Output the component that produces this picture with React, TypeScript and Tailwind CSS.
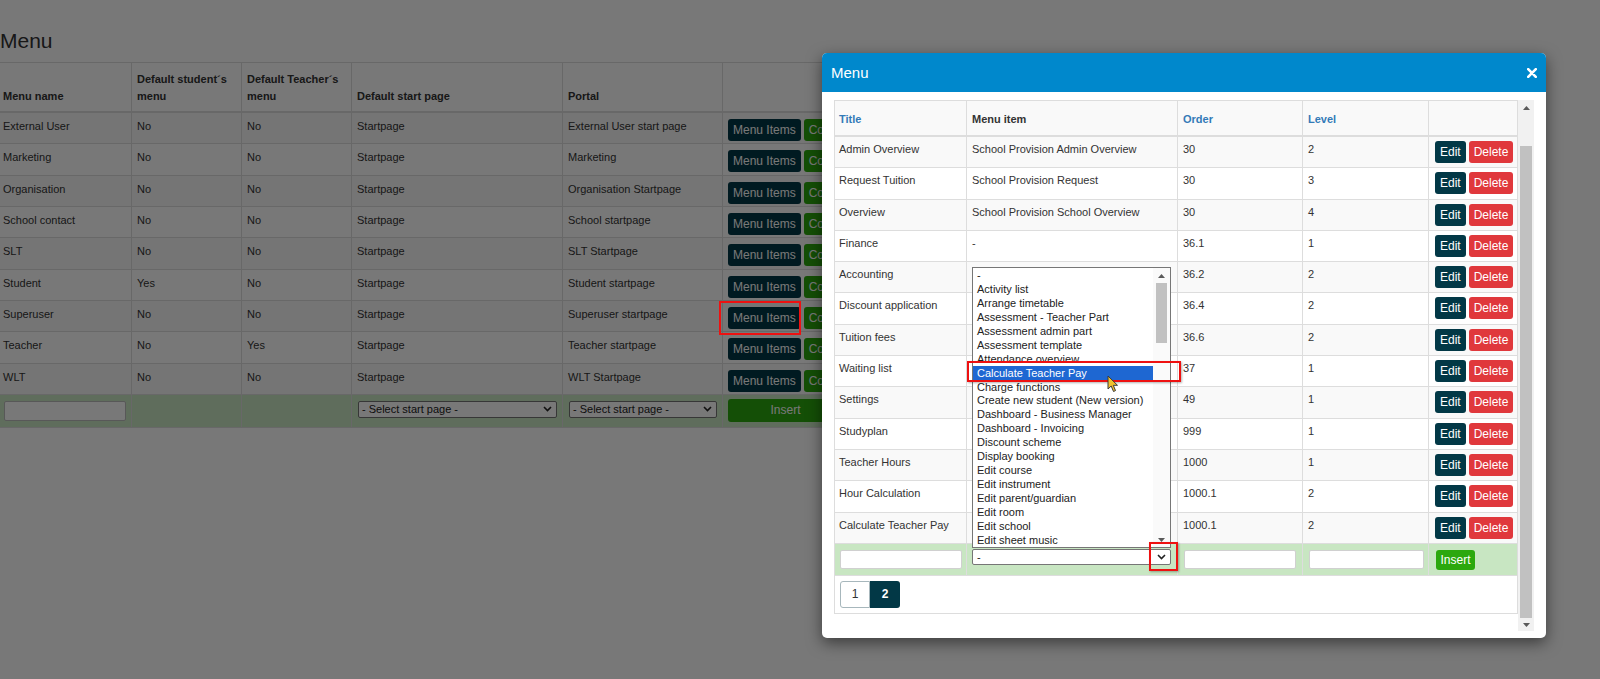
import React from "react";

const leftRows = [
  ["External User", "No", "No", "Startpage", "External User start page"],
  ["Marketing", "No", "No", "Startpage", "Marketing"],
  ["Organisation", "No", "No", "Startpage", "Organisation Startpage"],
  ["School contact", "No", "No", "Startpage", "School startpage"],
  ["SLT", "No", "No", "Startpage", "SLT Startpage"],
  ["Student", "Yes", "No", "Startpage", "Student startpage"],
  ["Superuser", "No", "No", "Startpage", "Superuser startpage"],
  ["Teacher", "No", "Yes", "Startpage", "Teacher startpage"],
  ["WLT", "No", "No", "Startpage", "WLT Startpage"],
];

const modalRows = [
  ["Admin Overview", "School Provision Admin Overview", "30", "2"],
  ["Request Tuition", "School Provision Request", "30", "3"],
  ["Overview", "School Provision School Overview", "30", "4"],
  ["Finance", "-", "36.1", "1"],
  ["Accounting", "", "36.2", "2"],
  ["Discount application", "", "36.4", "2"],
  ["Tuition fees", "", "36.6", "2"],
  ["Waiting list", "", "37", "1"],
  ["Settings", "", "49", "1"],
  ["Studyplan", "", "999", "1"],
  ["Teacher Hours", "", "1000", "1"],
  ["Hour Calculation", "", "1000.1", "2"],
  ["Calculate Teacher Pay", "", "1000.1", "2"],
];

const options = [
  "-",
  "Activity list",
  "Arrange timetable",
  "Assessment - Teacher Part",
  "Assessment admin part",
  "Assessment template",
  "Attendance overview",
  "Calculate Teacher Pay",
  "Charge functions",
  "Create new student (New version)",
  "Dashboard - Business Manager",
  "Dashboard - Invoicing",
  "Discount scheme",
  "Display booking",
  "Edit course",
  "Edit instrument",
  "Edit parent/guardian",
  "Edit room",
  "Edit school",
  "Edit sheet music",
];

function Chevron() {
  return (
    <svg width="9" height="6" viewBox="0 0 9 6" className="shrink-0">
      <path d="M1 1 L4.5 4.5 L8 1" fill="none" stroke="#222" strokeWidth="1.6" />
    </svg>
  );
}

function UpArrow() {
  return (
    <svg width="7" height="4" viewBox="0 0 7 4">
      <path d="M0 4 L3.5 0 L7 4 Z" fill="#5a5a5a" />
    </svg>
  );
}

function DownArrow() {
  return (
    <svg width="7" height="4" viewBox="0 0 7 4">
      <path d="M0 0 L3.5 4 L7 0 Z" fill="#5a5a5a" />
    </svg>
  );
}

function FakeSelect({ w, text }: { w: string; text: string }) {
  return (
    <div
      className={`${w} h-[17px] bg-white border border-[#767676] rounded-[2px] flex items-center justify-between pl-[3px] pr-[4px] text-[11px] leading-[15px] text-[#222]`}
    >
      <span className="whitespace-nowrap">{text}</span>
      <Chevron />
    </div>
  );
}

export default function App() {
  return (
    <div className="relative w-[1600px] h-[679px] overflow-hidden bg-white text-[#333] font-['Liberation_Sans',Arial,sans-serif]">
      {/* Page */}
      <div className="pt-[28px]">
        <h1 className="text-[21px] leading-[26px] font-normal mb-[8px]">Menu</h1>
        <div className="w-[1150px] text-[11px]">
          <div className="grid grid-cols-[132px_110px_110px_211px_160px_427px] h-[51px] border-t border-b-2 border-[#ddd] font-bold leading-[16.5px]">
            <div className="flex items-end pb-[7px] pl-[3px] border-r border-[#ddd]">Menu name</div>
            <div className="flex items-end pb-[7px] pl-[5px] border-r border-[#ddd]">Default student´s menu</div>
            <div className="flex items-end pb-[7px] pl-[5px] border-r border-[#ddd]">Default Teacher´s menu</div>
            <div className="flex items-end pb-[7px] pl-[5px] border-r border-[#ddd]">Default start page</div>
            <div className="flex items-end pb-[7px] pl-[5px] border-r border-[#ddd]">Portal</div>
            <div className="border-r border-[#ddd]"></div>
          </div>
          {leftRows.map((r, i) => (
            <div
              key={i}
              className={`grid grid-cols-[132px_110px_110px_211px_160px_427px] h-[31.33px] border-b border-[#ddd] leading-[16.5px] ${i % 2 === 0 ? "bg-[#f9f9f9]" : "bg-white"}`}
            >
              <div className="pt-[5px] pl-[3px] border-r border-[#ddd]">{r[0]}</div>
              <div className="pt-[5px] pl-[5px] border-r border-[#ddd]">{r[1]}</div>
              <div className="pt-[5px] pl-[5px] border-r border-[#ddd]">{r[2]}</div>
              <div className="pt-[5px] pl-[5px] border-r border-[#ddd]">{r[3]}</div>
              <div className="pt-[5px] pl-[5px] border-r border-[#ddd]">{r[4]}</div>
              <div className="pt-[6px] pl-[5px] border-r border-[#ddd] flex gap-[3px] items-start">
                <span className="h-[22px] px-[5px] rounded-[3px] bg-[#023846] text-white text-[12px] leading-[22px] whitespace-nowrap">Menu Items</span>
                <span className="h-[22px] px-[5px] rounded-[3px] bg-[#2ca80e] text-white text-[12px] leading-[22px]">Copy</span>
                <span className="h-[22px] px-[5px] rounded-[3px] bg-[#023846] text-white text-[12px] leading-[22px]">Edit</span>
                <span className="h-[22px] px-[5px] rounded-[3px] bg-[#e0383c] text-white text-[12px] leading-[22px]">Delete</span>
              </div>
            </div>
          ))}
          <div className="grid grid-cols-[132px_110px_110px_211px_160px_427px] h-[33px] border-b border-[#ddd] bg-[#c9e7c4]">
            <div className="pt-[6px] pl-[4px] border-r border-[#ddd]">
              <div className="w-[122px] h-[20px] bg-white border border-[#bbb] rounded-[2px]"></div>
            </div>
            <div className="border-r border-[#ddd]"></div>
            <div className="border-r border-[#ddd]"></div>
            <div className="pt-[6px] pl-[6px] border-r border-[#ddd]">
              <FakeSelect w="w-[199px]" text="- Select start page -" />
            </div>
            <div className="pt-[6px] pl-[6px] border-r border-[#ddd]">
              <FakeSelect w="w-[148px]" text="- Select start page -" />
            </div>
            <div className="pt-[4px] pl-[5px] border-r border-[#ddd]">
              <div className="w-[115px] h-[23px] rounded-[3px] bg-[#2ca80e] text-white text-[12px] leading-[23px] text-center">Insert</div>
            </div>
          </div>
        </div>
      </div>

      {/* Backdrop */}
      <div className="absolute inset-0 bg-[rgba(0,0,0,0.53)]"></div>

      {/* Annotation on page */}
      <div className="absolute left-[719px] top-[301px] w-[82px] h-[34px] border-2 border-[#ee1111]"></div>

      {/* Modal */}
      <div className="absolute left-[822px] top-[53px] w-[724px] h-[585px] bg-white rounded-[5px] shadow-[0_5px_15px_rgba(0,0,0,0.5)] overflow-hidden">
        <div className="h-[39px] bg-[#0088cc] flex items-center justify-between pl-[9px] pr-[9px]">
          <span className="text-white text-[15px] leading-[18px]">Menu</span>
          <svg width="10" height="10" viewBox="0 0 10 10">
            <path d="M1.2 1.2 L8.8 8.8 M8.8 1.2 L1.2 8.8" stroke="#fff" strokeWidth="2.6" strokeLinecap="round" />
          </svg>
        </div>
        <div className="pt-[8px] px-[12px] flex">
          <div className="w-[684px] h-[531px] overflow-hidden">
            <div className="border border-[#ddd] text-[11px] text-[#333]">
              <div className="grid grid-cols-[132px_211px_125px_126px_88px] h-[36px] border-b-2 border-[#ddd] bg-[#f9f9f9] font-bold leading-[16px]">
                <div className="flex items-end pb-[8px] pl-[4px] border-r border-[#ddd] text-[#337ab7]">Title</div>
                <div className="flex items-end pb-[8px] pl-[5px] border-r border-[#ddd] text-[#333]">Menu item</div>
                <div className="flex items-end pb-[8px] pl-[5px] border-r border-[#ddd] text-[#337ab7]">Order</div>
                <div className="flex items-end pb-[8px] pl-[5px] border-r border-[#ddd] text-[#337ab7]">Level</div>
                <div></div>
              </div>
              {modalRows.map((r, i) => (
                <div
                  key={i}
                  className={`grid grid-cols-[132px_211px_125px_126px_88px] h-[31.3px] border-b border-[#ddd] leading-[16px] ${i % 2 === 0 ? "bg-[#f9f9f9]" : "bg-white"}`}
                >
                  <div className="pt-[4px] pl-[4px] border-r border-[#ddd] whitespace-nowrap">{r[0]}</div>
                  <div className="pt-[4px] pl-[5px] border-r border-[#ddd] whitespace-nowrap">{r[1]}</div>
                  <div className="pt-[4px] pl-[5px] border-r border-[#ddd] text-[#333]">{r[2]}</div>
                  <div className="pt-[4px] pl-[5px] border-r border-[#ddd] text-[#333]">{r[3]}</div>
                  <div className="pt-[4px] pl-[6px] flex gap-[3px] items-start">
                    <span className="h-[22px] px-[5px] rounded-[3px] bg-[#023846] text-white text-[12px] leading-[22px]">Edit</span>
                    <span className="h-[22px] px-[5px] rounded-[3px] bg-[#e0383c] text-white text-[12px] leading-[22px]">Delete</span>
                  </div>
                </div>
              ))}
              <div className="grid grid-cols-[132px_211px_125px_126px_88px] h-[32px] border-b border-[#ddd] bg-[#c8e6c2]">
                <div className="pt-[6px] pl-[5px] border-r border-[#ddd]">
                  <div className="w-[122px] h-[19px] bg-white border border-[#d0d0d0] rounded-[2px]"></div>
                </div>
                <div className="pt-[5px] pl-[5px] border-r border-[#ddd]">
                  <div className="w-[199px] h-[16px] bg-white border border-[#767676] rounded-[2px] flex items-center justify-between pl-[4px] pr-[4px] text-[11px] leading-[14px] text-[#222]">
                    <span>-</span>
                    <Chevron />
                  </div>
                </div>
                <div className="pt-[6px] pl-[6px] border-r border-[#ddd]">
                  <div className="w-[112px] h-[19px] bg-white border border-[#d0d0d0] rounded-[2px]"></div>
                </div>
                <div className="pt-[6px] pl-[6px] border-r border-[#ddd]">
                  <div className="w-[115px] h-[19px] bg-white border border-[#d0d0d0] rounded-[2px]"></div>
                </div>
                <div className="pt-[6px] pl-[7px]">
                  <div className="w-[39px] h-[20px] rounded-[3px] bg-[#2ca80e] text-white text-[12px] leading-[20px] text-center">Insert</div>
                </div>
              </div>
              <div className="pt-[5px] pb-[5px] pl-[5px] flex">
                <span className="w-[30px] h-[27px] border border-[#a7b7bc] rounded-l-[3px] flex items-center justify-center text-[12px] text-[#333]">1</span>
                <span className="w-[30px] h-[27px] bg-[#023846] rounded-r-[3px] flex items-center justify-center text-[12px] font-bold text-white">2</span>
              </div>
            </div>
          </div>
          <div className="w-[16px] h-[531px] bg-[#f1f1f1] flex flex-col items-center">
            <div className="h-[15px] flex items-center justify-center"><UpArrow /></div>
            <div className="mt-[31px] w-[12px] h-[472px] bg-[#c1c1c1]"></div>
            <div className="flex-1"></div>
            <div className="h-[13px] flex items-center justify-center"><DownArrow /></div>
          </div>
        </div>
      </div>

      {/* Open listbox */}
      <div className="absolute left-[972px] top-[267px] w-[199px] h-[281px] bg-white border border-[#767676] flex overflow-hidden text-[11px] text-[#222]">
        <div className="flex-1 flex flex-col">
          {options.map((o, i) => (
            <div
              key={i}
              className={`h-[13.95px] leading-[14px] pl-[4px] whitespace-nowrap shrink-0 ${o === "Calculate Teacher Pay" ? "bg-[#1e67d2] text-white" : ""}`}
            >
              {o}
            </div>
          ))}
        </div>
        <div className="w-[17px] flex flex-col items-center bg-[#fafafa]">
          <div className="h-[15px] flex items-center justify-center"><UpArrow /></div>
          <div className="w-[11px] h-[60px] bg-[#c1c1c1]"></div>
          <div className="flex-1"></div>
          <div className="h-[15px] flex items-center justify-center"><DownArrow /></div>
        </div>
      </div>

      {/* Annotations */}
      <div className="absolute left-[967px] top-[361px] w-[214px] h-[21px] border-2 border-[#ee1111] shadow-[1px_1px_2px_rgba(0,0,0,0.3)]"></div>
      <div className="absolute left-[1149px] top-[542px] w-[29px] h-[29px] border-2 border-[#ee1111] shadow-[1px_1px_2px_rgba(0,0,0,0.3)]"></div>

      {/* Cursor */}
      <svg className="absolute left-[1107px] top-[375px]" width="12" height="18" viewBox="0 0 12 18">
        <path d="M1 1 L1 14 L4.2 11 L6.5 16.5 L8.5 15.6 L6.3 10.3 L10.5 10.3 Z" fill="#f2c12e" stroke="#3a3a3a" strokeWidth="1" strokeLinejoin="round" />
      </svg>
    </div>
  );
}
